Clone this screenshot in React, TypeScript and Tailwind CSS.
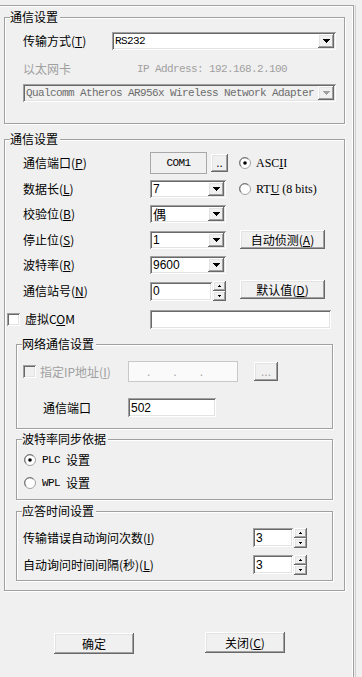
import React from "react";

const SUNKEN =
  "shadow-[inset_1px_1px_0_#a0a0a0,inset_-1px_-1px_0_#ffffff,inset_2px_2px_0_#696969,inset_-2px_-2px_0_#e3e3e3]";
const RAISED =
  "shadow-[inset_-1px_-1px_0_#696969,inset_1px_1px_0_#ffffff,inset_-2px_-2px_0_#a0a0a0,inset_2px_2px_0_#e3e3e3]";
const MONO = "font-['Liberation_Mono',monospace] text-[11px] tracking-[-0.6px]";
const SANS = "font-['Liberation_Sans',Arial,sans-serif] text-[12px]";

function DownTri({ color = "#000" }: { color?: string }) {
  return (
    <svg width="7" height="4" viewBox="0 0 7 4" shapeRendering="crispEdges">
      <path d="M0 0h7v1h-1v1h-1v1h-1v1h-1v-1h-1v-1h-1v-1h-1z" fill={color} />
    </svg>
  );
}

function SmallTri({ up }: { up?: boolean }) {
  return (
    <svg width="3" height="2" viewBox="0 0 3 2" shapeRendering="crispEdges">
      {up ? <path d="M1 0h1v1h1v1h-3v-1h1z" fill="#000" /> : <path d="M0 0h3v1h-1v1h-1v-1h-1z" fill="#000" />}
    </svg>
  );
}

function Combo({
  className = "",
  children,
  disabled,
}: {
  className?: string;
  children: React.ReactNode;
  disabled?: boolean;
}) {
  return (
    <div
      className={`${SUNKEN} flex items-center h-[18px] pl-[3px] pr-[2px] ${
        disabled ? "bg-[#f0f0f0]" : "bg-white"
      } ${className}`}
    >
      <div className="flex-1 flex items-center whitespace-nowrap">{children}</div>
      <div className={`${RAISED} bg-[#f0f0f0] w-[16px] h-[14px] flex items-center justify-center`}>
        <DownTri color={disabled ? "#a0a0a0" : "#000"} />
      </div>
    </div>
  );
}

function Radio({ checked }: { checked?: boolean }) {
  return (
    <svg width="12" height="12" viewBox="0 0 12 12">
      <circle cx="6" cy="6" r="5.5" fill="#ffffff" stroke="#a0a0a0" />
      <path d="M2.2 9.2A4.6 4.6 0 0 1 9.2 2.2" fill="none" stroke="#696969" strokeWidth="1" />
      {checked && <circle cx="6" cy="6" r="1.8" fill="#000" />}
    </svg>
  );
}

function Check({ disabled }: { disabled?: boolean }) {
  return (
    <div
      className={`w-[13px] h-[13px] ${SUNKEN} ${disabled ? "bg-[#f0f0f0]" : "bg-white"}`}
    />
  );
}

function Spin({ value, boxW }: { value: string; boxW: string }) {
  return (
    <div className="flex items-center">
      <div className={`${SUNKEN} bg-white h-[19px] ${boxW} pl-[3px] flex items-center ${SANS}`}>{value}</div>
      <div className="flex flex-col ml-[1px]">
        <div className={`${RAISED} bg-[#f0f0f0] w-[13px] h-[10px] flex items-center justify-center`}>
          <SmallTri up />
        </div>
        <div className={`${RAISED} bg-[#f0f0f0] w-[13px] h-[10px] flex items-center justify-center`}>
          <SmallTri />
        </div>
      </div>
    </div>
  );
}

function Group({
  label,
  className = "",
  children,
}: {
  label: string;
  className?: string;
  children?: React.ReactNode;
}) {
  return (
    <div
      className={`relative border border-[#a0a0a0] shadow-[1px_1px_0_#ffffff,inset_1px_1px_0_#ffffff] ${className}`}
    >
      <span className="absolute top-[-8px] left-[5px] pr-[2px] bg-[#f0f0f0] leading-[14px] whitespace-nowrap">
        {label}
      </span>
      {children}
    </div>
  );
}

function U({ children }: { children: React.ReactNode }) {
  return <span className="underline underline-offset-[1px]">{children}</span>;
}

function Btn({ className = "", children }: { className?: string; children: React.ReactNode }) {
  return (
    <div className={`${RAISED} bg-[#f0f0f0] flex items-center justify-center leading-[14px] ${className}`}>
      {children}
    </div>
  );
}

export default function App() {
  return (
    <div className="w-[362px] h-[677px] bg-[#f0f0f0] text-[12px] leading-[14px] text-black font-['Noto_Sans_CJK_SC',sans-serif] overflow-hidden">
      <div className="pt-[5px] flex">
        <div className="w-[354px] h-[672px] border-t border-r border-[#a0a0a0] shadow-[inset_-1px_1px_0_#ffffff]">
          {/* Group 1 */}
          <Group label="通信设置" className="ml-[4px] mt-[11px] w-[341px] h-[107px]">
            <div className="pl-[18px] pt-[14px]">
              <div className="flex items-center h-[18px]">
                <div className="w-[89px]">
                  传输方式(<U>T</U>)
                </div>
                <Combo className="w-[224px]">
                  <span className={MONO}>RS232</span>
                </Combo>
              </div>
              <div className="flex items-center h-[18px] mt-[10px] text-[#a0a0a0]">
                <div className="w-[114px]">以太网卡</div>
                <div className={MONO}>IP Address: 192.168.2.100</div>
              </div>
              <Combo className="w-[313px] mt-[6px]" disabled>
                <span className={`${MONO} text-[#6d6d6d]`}>
                  Qualcomm Atheros AR956x Wireless Network Adapter
                </span>
              </Combo>
            </div>
          </Group>

          {/* Group 2 */}
          <Group label="通信设置" className="ml-[4px] mt-[15px] w-[341px] h-[452px]">
            <div className="pl-[18px] pt-[10px]">
              <div className="flex items-center h-[26px]">
                <div className="w-[127px]">
                  通信端口(<U>P</U>)
                </div>
                <div
                  className={`w-[57px] h-[22px] border border-[#a8a8a8] flex items-center justify-center ${MONO}`}
                >
                  COM1
                </div>
                <Btn className="ml-[4px] w-[17px] h-[18px]">
                  <span className={`${SANS} leading-[10px]`}>..</span>
                </Btn>
                <div className="ml-[11px] flex items-center">
                  <Radio checked />
                  <span className="ml-[5px] font-['Liberation_Serif',serif] text-[12px]">
                    ASC<U>I</U>I
                  </span>
                </div>
              </div>
              <div className="flex items-center h-[25px]">
                <div className="w-[127px]">
                  数据长(<U>L</U>)
                </div>
                <Combo className="w-[76px]">
                  <span className={SANS}>7</span>
                </Combo>
                <div className="ml-[13px] flex items-center">
                  <Radio />
                  <span className="ml-[5px] font-['Liberation_Serif',serif] text-[12px]">
                    RT<U>U</U> (8 bits)
                  </span>
                </div>
              </div>
              <div className="flex items-center h-[26px]">
                <div className="w-[127px]">
                  校验位(<U>B</U>)
                </div>
                <Combo className="w-[76px]">
                  <span className="text-[13px] leading-[14px]">偶</span>
                </Combo>
              </div>
              <div className="flex items-center h-[25px]">
                <div className="w-[127px]">
                  停止位(<U>S</U>)
                </div>
                <Combo className="w-[76px]">
                  <span className={SANS}>1</span>
                </Combo>
                <Btn className="ml-[14px] w-[85px] h-[19px]">
                  自动侦测(<U>A</U>)
                </Btn>
              </div>
              <div className="flex items-center h-[25px]">
                <div className="w-[127px]">
                  波特率(<U>R</U>)
                </div>
                <Combo className="w-[76px]">
                  <span className={SANS}>9600</span>
                </Combo>
              </div>
              <div className="flex items-center h-[28px]">
                <div className="w-[127px]">
                  通信站号(<U>N</U>)
                </div>
                <Spin value="0" boxW="w-[62px]" />
                <Btn className="ml-[14px] w-[85px] h-[19px] mt-[-3px]">
                  默认值(<U>D</U>)
                </Btn>
              </div>
              <div className="flex items-center h-[28px] ml-[-16px]">
                <div className="w-[143px] flex items-center">
                  <Check />
                  <span className="ml-[5px]">
                    虚拟C<U>O</U>M
                  </span>
                </div>
                <div className={`${SUNKEN} bg-white w-[181px] h-[19px]`} />
              </div>
            </div>

            {/* Network group */}
            <Group label="网络通信设置" className="ml-[11px] mt-[11px] w-[317px] h-[85px]">
              <div className="pl-[6px] pt-[16px]">
                <div className="flex items-center h-[21px]">
                  <div className="w-[105px] flex items-center text-[#a0a0a0]">
                    <Check disabled />
                    <span className="ml-[4px]">
                      指定IP地址(<U>I</U>)
                    </span>
                  </div>
                  <div
                    className={`w-[110px] h-[21px] bg-[#fafafa] border border-[#c8c8c8] flex items-center pl-[18px] gap-[23px] text-[#a0a0a0] ${SANS}`}
                  >
                    <span>.</span>
                    <span>.</span>
                    <span>.</span>
                  </div>
                  <Btn className="ml-[16px] w-[24px] h-[19px] text-[#a0a0a0]">
                    <span className={`${SANS} leading-[10px]`}>...</span>
                  </Btn>
                </div>
                <div className="flex items-center h-[19px] mt-[16px]">
                  <div className="w-[105px] pl-[20px]">通信端口</div>
                  <div className={`${SUNKEN} bg-white w-[88px] h-[19px] pl-[3px] flex items-center ${SANS}`}>
                    502
                  </div>
                </div>
              </div>
            </Group>

            {/* Baud sync group */}
            <Group label="波特率同步依据" className="ml-[11px] mt-[10px] w-[317px] h-[61px]">
              <div className="pl-[7px] pt-[12px]">
                <div className="flex items-center h-[16px]">
                  <Radio checked />
                  <span className={`ml-[6px] ${MONO}`}>PLC</span>
                  <span className="ml-[6px]">设置</span>
                </div>
                <div className="flex items-center h-[16px] mt-[7px]">
                  <Radio />
                  <span className={`ml-[6px] ${MONO}`}>WPL</span>
                  <span className="ml-[6px]">设置</span>
                </div>
              </div>
            </Group>

            {/* Response time group */}
            <Group label="应答时间设置" className="ml-[11px] mt-[11px] w-[317px] h-[70px]">
              <div className="pl-[6px] pt-[16px]">
                <div className="flex items-center h-[19px]">
                  <div className="w-[230px]">
                    传输错误自动询问次数(<U>I</U>)
                  </div>
                  <Spin value="3" boxW="w-[40px]" />
                </div>
                <div className="flex items-center h-[19px] mt-[8px]">
                  <div className="w-[230px]">
                    自动询问时间间隔(秒)(<U>L</U>)
                  </div>
                  <Spin value="3" boxW="w-[40px]" />
                </div>
              </div>
            </Group>
          </Group>

          {/* Bottom buttons */}
          <div className="flex items-start mt-[42px]">
            <Btn className="ml-[54px] w-[80px] h-[21px]">确定</Btn>
            <Btn className="ml-[71px] w-[80px] h-[21px] mt-[-1px]">
              关闭(<U>C</U>)
            </Btn>
          </div>
        </div>
        <div className="ml-[1px] w-px h-[672px] bg-[#d0d0d0]" />
      </div>
    </div>
  );
}
